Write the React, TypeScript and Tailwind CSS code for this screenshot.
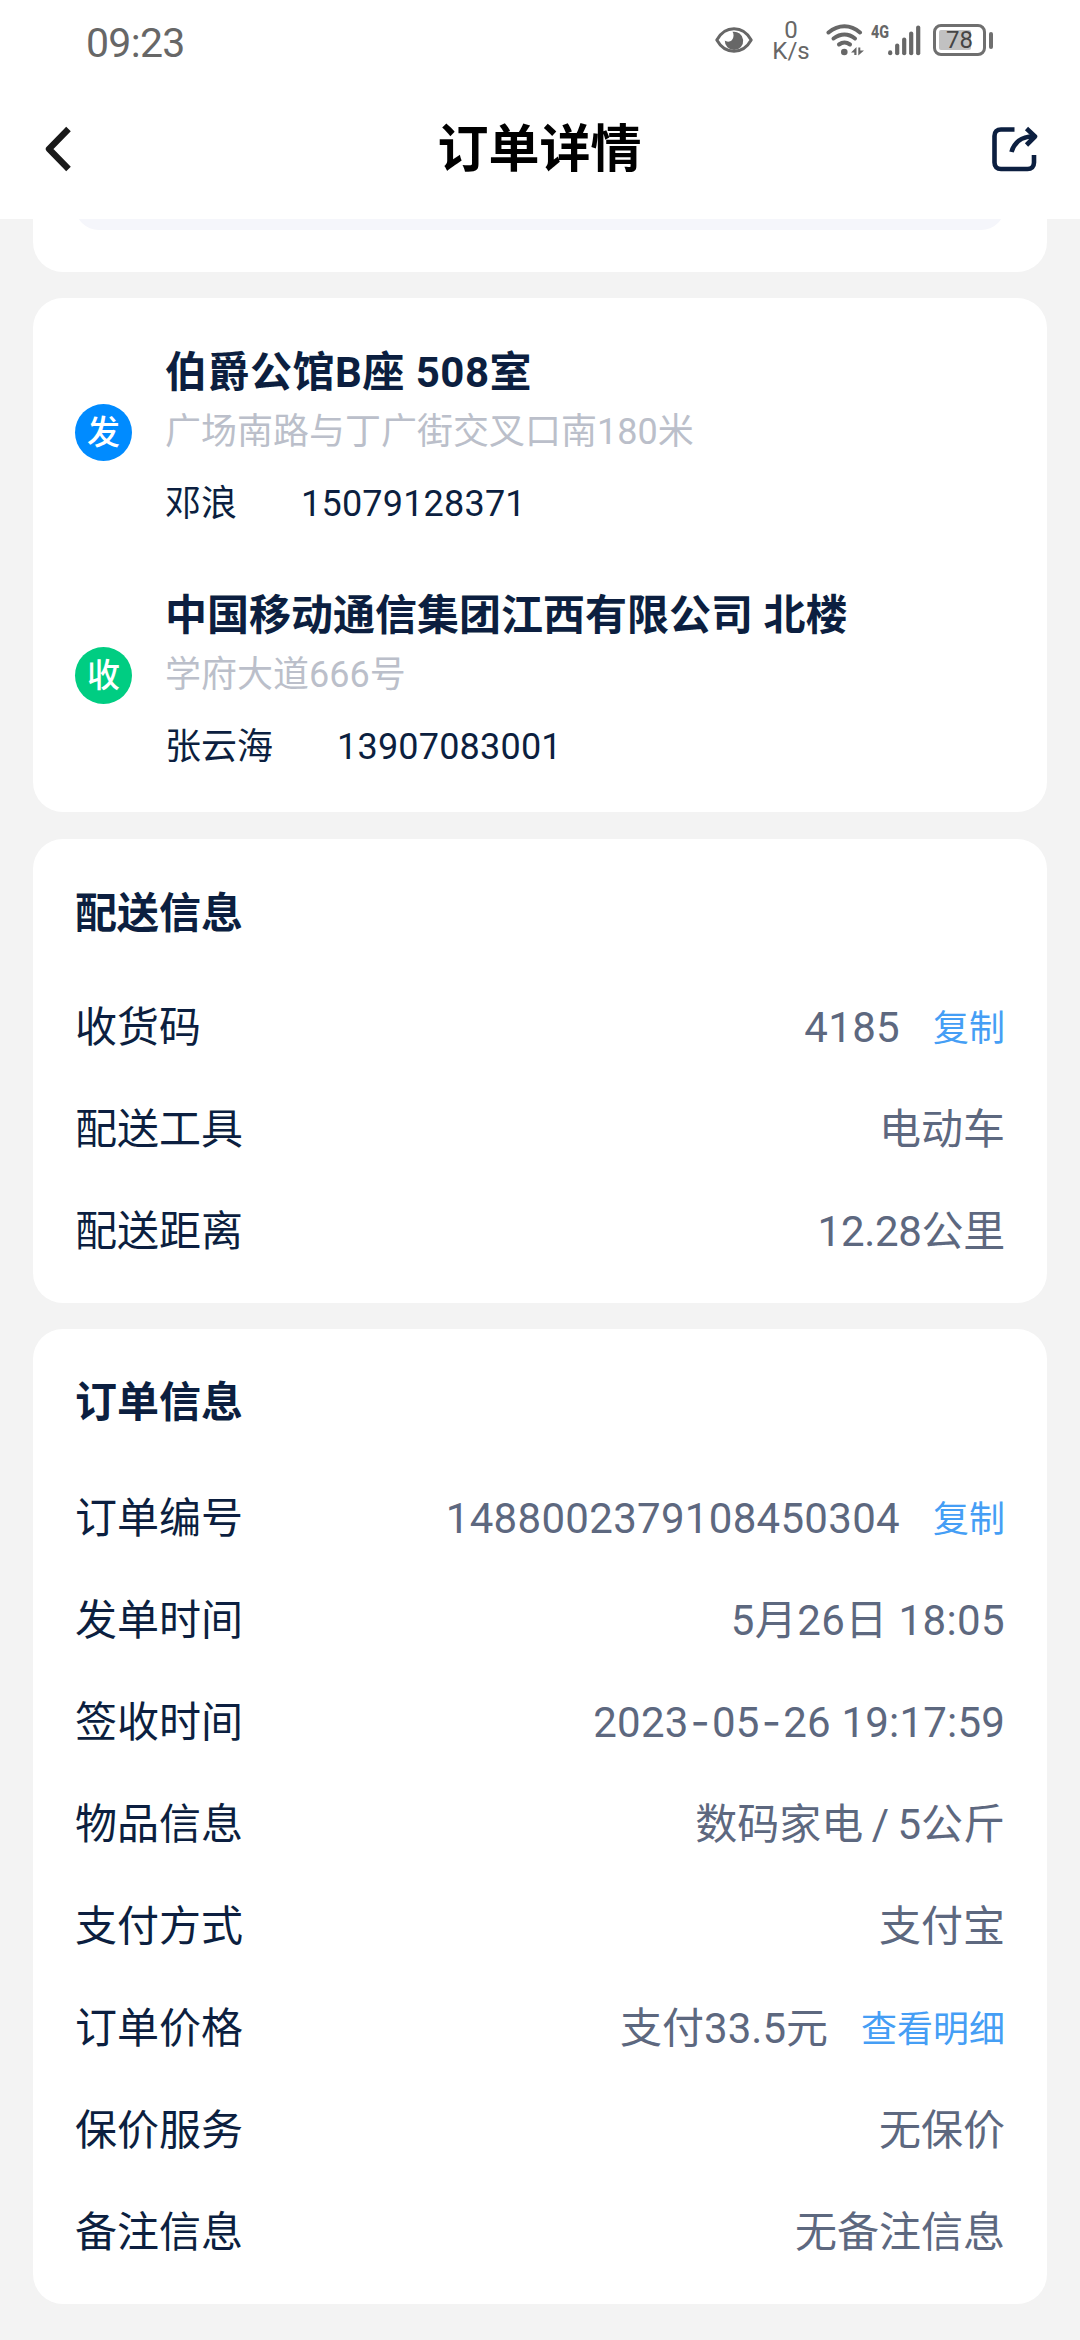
import React from "react";

type Row = {
  label: string;
  value: string;
  valueClass?: string;
  action?: string;
};

type Contact = {
  badge: string;
  badgeClass: string;
  title: string;
  titleClass?: string;
  address: string;
  name: string;
  phone: string;
};

const contacts: Contact[] = [
  {
    badge: "发",
    badgeClass: "bg-[#008bff]",
    title: "伯爵公馆B座 508室",
    titleClass: "tracking-[0.5px]",
    address: "广场南路与丁广街交叉口南180米",
    name: "邓浪",
    phone: "15079128371",
  },
  {
    badge: "收",
    badgeClass: "bg-[#00cd82]",
    title: "中国移动通信集团江西有限公司 北楼",
    address: "学府大道666号",
    name: "张云海",
    phone: "13907083001",
  },
];

const deliveryRows: Row[] = [
  { label: "收货码", value: "4185", valueClass: "tracking-[0.3px]", action: "复制" },
  { label: "配送工具", value: "电动车" },
  { label: "配送距离", value: "12.28公里", valueClass: "tracking-[-0.3px]" },
];

const orderRows: Row[] = [
  { label: "订单编号", value: "1488002379108450304", valueClass: "tracking-[0.3px]", action: "复制" },
  { label: "发单时间", value: "5月26日 18:05", valueClass: "tracking-[0.4px]" },
  { label: "签收时间", value: "2023-05-26 19:17:59", valueClass: "tracking-[0.2px]" },
  { label: "物品信息", value: "数码家电 / 5公斤", valueClass: "[word-spacing:-2px]" },
  { label: "支付方式", value: "支付宝" },
  { label: "订单价格", value: "支付33.5元", action: "查看明细" },
  { label: "保价服务", value: "无保价" },
  { label: "备注信息", value: "无备注信息" },
];

function EyeIcon() {
  return (
    <svg width="38" height="26" viewBox="0 0 38 26" fill="none">
      <path d="M1.8 13C6 5.500 12 1.800 19 1.800S32 5.500 36.200 13C32 20.500 26 24.200 19 24.200S6 20.500 1.800 13Z" stroke="#676767" strokeWidth="3" strokeLinejoin="round" />
      <path d="M17.500 4.800A9.200 9.200 0 1 1 9.800 13.500C11.500 15 15 15.200 17 13C19 10.500 19 7 17.500 4.800Z" fill="#676767" />
    </svg>
  );
}

function WifiIcon() {
  return (
    <svg width="38" height="32" viewBox="0 0 38 32" fill="none">
      <g stroke="#676767" strokeWidth="4" strokeLinecap="round">
        <path d="M2.500 8.500C12.500 0.200 24.500 0.200 34 8.500" />
        <path d="M7.500 14.500C14.500 9.300 22.500 9.300 29 14.500" />
        <path d="M13 20.500C16.500 18 20.500 18 24 20.500" />
      </g>
      <circle cx="18.300" cy="28" r="3.300" fill="#676767" />
      <path d="M25 28.500L30.500 23V31H28.300V28.500Z" fill="#676767" />
      <path d="M38 26.500L32.300 31.500V23.500H34.300V26.500Z" fill="#676767" />
    </svg>
  );
}

function SignalIcon() {
  return (
    <svg className="-mt-[8px]" width="50" height="40" viewBox="0 -8 50 40">
      <text x="0" y="14" textLength="18" lengthAdjust="spacingAndGlyphs" fill="#676767" fontSize="18.500" fontWeight="800" fontFamily="Roboto, sans-serif">4G</text>
      <g stroke="#676767" strokeWidth="4.200" strokeLinecap="round">
        <path d="M19.200 28.400V29.200" />
        <path d="M26.200 21.500V29.200" />
        <path d="M33.200 15.500V29.200" />
        <path d="M40.200 9.500V29.200" />
        <path d="M47.200 3.500V29.200" />
      </g>
    </svg>
  );
}

function Battery({ level }: { level: number }) {
  return (
    <div className="flex items-center gap-[3px]">
      <div className="relative h-[32px] w-[53px] rounded-[8px] border-[3px] border-[#6f6f6f] p-[3px]">
        <div className="h-full rounded-[2px] bg-[#c1c1c1]" style={{ width: `${level}%` }} />
        <span className="absolute inset-0 flex items-center justify-center text-[24px] leading-none text-[#454545]">{level}</span>
      </div>
      <div className="h-[17px] w-[4px] rounded-full bg-[#6f6f6f]" />
    </div>
  );
}

function StatusBar() {
  return (
    <div className="flex h-[80px] items-start justify-between pr-[87px] pl-[86px] text-[#676767]">
      <div className="mt-[19px] text-[41px] leading-[48px] font-[450] tracking-[-0.7px]">09:23</div>
      <div className="mt-[24px] flex items-start">
        <div className="mt-[3px]">
          <EyeIcon />
        </div>
        <div className="mt-[-4px] ml-[20px] flex w-[36px] flex-col items-center text-[24px] leading-[21px]">
          <span>0</span>
          <span>K/s</span>
        </div>
        <div className="ml-[17px]">
          <WifiIcon />
        </div>
        <div className="ml-[7px]">
          <SignalIcon />
        </div>
        <div className="ml-[12px]">
          <Battery level={78} />
        </div>
      </div>
    </div>
  );
}

function NavBar() {
  return (
    <div className="flex h-[138px] items-center justify-between pr-[42px] pl-[44px]">
      <button className="flex w-[45px] justify-start">
        <svg width="28" height="46" viewBox="0 0 28 46" fill="none">
          <path d="M24.500 3L5 23L24.500 43" stroke="#191919" strokeWidth="6.400" strokeLinejoin="round" />
        </svg>
      </button>
      <h1 className="mt-[2px] text-[51px] leading-[60px] font-bold text-black">订单详情</h1>
      <button>
        <svg width="48" height="48" viewBox="0 0 48 48" fill="none" stroke="#0c1f40" strokeWidth="4.600">
          <path d="M24.500 4.500H11C7 4.500 4.500 7 4.500 11V37.500C4.500 41.500 7 44 11 44H37.500C41.500 44 44 41.500 44 37.500V30" />
          <path d="M21.500 27C24 18 31 11.500 43 11.500" />
          <path d="M36.500 3.500L45 11.500L36.500 20" strokeLinejoin="round" />
        </svg>
      </button>
    </div>
  );
}

function ContactBlock({ contact }: { contact: Contact }) {
  return (
    <div className="flex h-[243px]">
      <div className={`mt-[106px] flex size-[57px] shrink-0 items-center justify-center rounded-full text-[33px] leading-none font-medium text-white ${contact.badgeClass}`}>
        {contact.badge}
      </div>
      <div className="ml-[33px]">
        <div className={`mt-[45px] text-[42px] leading-[60px] font-bold ${contact.titleClass ?? ""}`}>{contact.title}</div>
        <div className="mt-[4px] text-[36px] leading-[50px] text-[#bbbfca]">{contact.address}</div>
        <div className="mt-[22px] flex gap-[64px] text-[36px] leading-[50px]">
          <span>{contact.name}</span>
          <span className="tracking-[0.2px]">{contact.phone}</span>
        </div>
      </div>
    </div>
  );
}

// dates use a wider hyphen than Roboto has
function Value({ text }: { text: string }) {
  return text.split("-").map((part, i) => (
    <React.Fragment key={i}>
      {i > 0 && <span className="mx-[2px] font-[Inter,sans-serif] leading-none">-</span>}
      {part}
    </React.Fragment>
  ));
}

function InfoRow({ row }: { row: Row }) {
  return (
    <div className="flex h-[102px] items-center justify-between text-[42px] leading-[60px]">
      <span>{row.label}</span>
      <div className="flex items-center gap-[33px] text-[#5d687f]">
        <span className={row.valueClass}>
          <Value text={row.value} />
        </span>
        {row.action && <button className="mt-[2px] text-[36px] leading-[58px] text-[#459ef5]">{row.action}</button>}
      </div>
    </div>
  );
}

export default function App() {
  return (
    <div className="h-[2340px] w-[1080px] overflow-hidden bg-[#f3f3f3] font-[Roboto,'Noto_Sans_CJK_SC',sans-serif] text-[#0c1f40]">
      <header className="h-[219px] bg-white">
        <StatusBar />
        <NavBar />
      </header>

      <main className="px-[33px]">
        {/* tail of the card that is scrolled under the header */}
        <section className="h-[53px] overflow-hidden rounded-b-[30px] bg-white px-[42px]">
          <div className="-mt-[20px] h-[31px] rounded-b-[24px] bg-[#f5f6fb]" />
        </section>

        <section className="mt-[26px] h-[514px] rounded-[30px] bg-white px-[42px]">
          {contacts.map((contact) => (
            <ContactBlock key={contact.phone} contact={contact} />
          ))}
        </section>

        <section className="mt-[27px] h-[464px] rounded-[30px] bg-white px-[42px] pt-[24px]">
          <h2 className="mb-[12px] text-[42px] leading-[102px] font-bold">配送信息</h2>
          {deliveryRows.map((row) => (
            <InfoRow key={row.label} row={row} />
          ))}
        </section>

        <section className="mt-[26px] h-[975px] rounded-[30px] bg-white px-[42px] pt-[23px]">
          <h2 className="mb-[14px] text-[42px] leading-[102px] font-bold">订单信息</h2>
          {orderRows.map((row) => (
            <InfoRow key={row.label} row={row} />
          ))}
        </section>
      </main>
    </div>
  );
}
